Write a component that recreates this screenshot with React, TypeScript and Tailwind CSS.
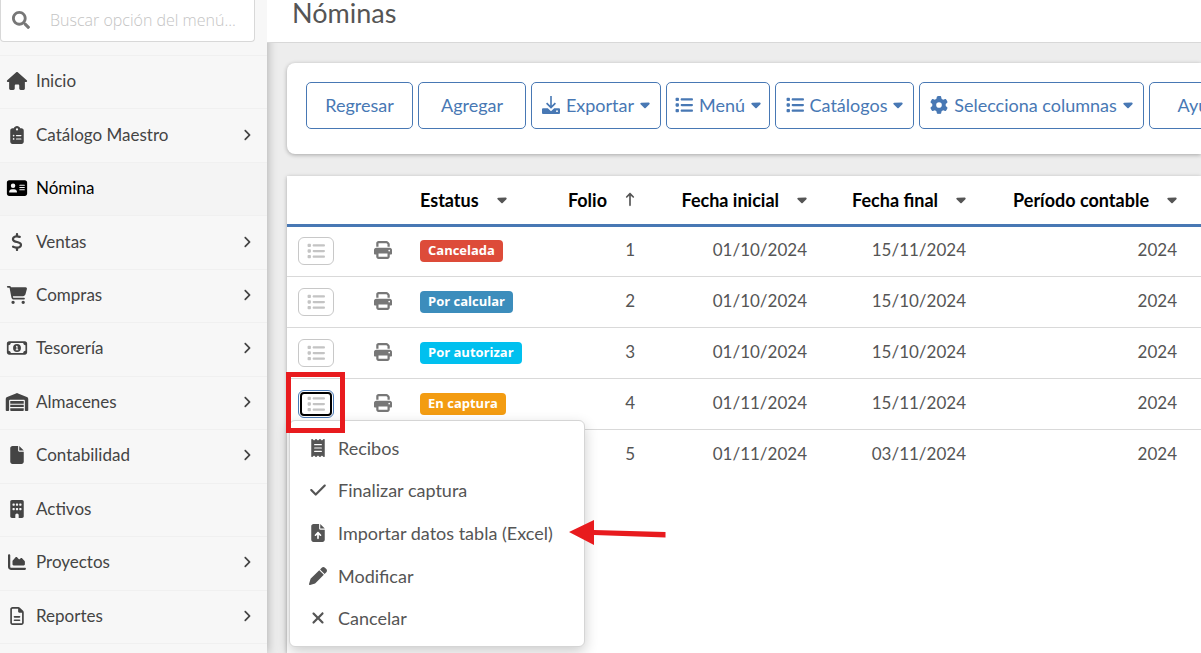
import React, { useState } from "react";
import { IconType } from "react-icons";
import { FaSearch } from "react-icons/fa";
import {
  FaAddressCard,
  FaAngleRight,
  FaArrowUpLong,
  FaBuilding,
  FaCaretDown,
  FaCartShopping,
  FaChartArea,
  FaCheck,
  FaClipboardList,
  FaDollarSign,
  FaFile,
  FaFileArrowUp,
  FaGear,
  FaHouse,
  FaList,
  FaPen,
  FaPrint,
  FaReceipt,
  FaRegFileLines,
  FaRegMoneyBill1,
  FaWarehouse,
  FaXmark,
} from "react-icons/fa6";

interface MenuItem {
  label: string;
  icon: IconType;
  expandable?: boolean;
  active?: boolean;
}

interface Payroll {
  folio: number;
  status?: string;
  badge?: string;
  start: string;
  end: string;
  period: number;
}

const menu: MenuItem[] = [
  { label: "Inicio", icon: FaHouse },
  { label: "Catálogo Maestro", icon: FaClipboardList, expandable: true },
  { label: "Nómina", icon: FaAddressCard, active: true },
  { label: "Ventas", icon: FaDollarSign, expandable: true },
  { label: "Compras", icon: FaCartShopping, expandable: true },
  { label: "Tesorería", icon: FaRegMoneyBill1, expandable: true },
  { label: "Almacenes", icon: FaWarehouse, expandable: true },
  { label: "Contabilidad", icon: FaFile, expandable: true },
  { label: "Activos", icon: FaBuilding },
  { label: "Proyectos", icon: FaChartArea, expandable: true },
  { label: "Reportes", icon: FaRegFileLines, expandable: true },
];

const payrolls: Payroll[] = [
  { folio: 1, status: "Cancelada", badge: "bg-[#dd4b39]", start: "01/10/2024", end: "15/11/2024", period: 2024 },
  { folio: 2, status: "Por calcular", badge: "bg-[#3c8dbc]", start: "01/10/2024", end: "15/10/2024", period: 2024 },
  { folio: 3, status: "Por autorizar", badge: "bg-[#00c0ef]", start: "01/10/2024", end: "15/10/2024", period: 2024 },
  { folio: 4, status: "En captura", badge: "bg-[#f39c12]", start: "01/11/2024", end: "15/11/2024", period: 2024 },
  { folio: 5, start: "01/11/2024", end: "03/11/2024", period: 2024 },
];

const actions: MenuItem[] = [
  { label: "Recibos", icon: FaReceipt },
  { label: "Finalizar captura", icon: FaCheck },
  { label: "Importar datos tabla (Excel)", icon: FaFileArrowUp },
  { label: "Modificar", icon: FaPen },
  { label: "Cancelar", icon: FaXmark },
];

const DownloadIcon = () => (
  <svg viewBox="0 0 18 18" className="size-[18px]" fill="currentColor">
    <path d="M8.200 0h1.600v9.600l3-3L14 7.800l-5 5-5-5 1.200-1.200 3 3z" />
    <path
      fillRule="evenodd"
      d="M1 12.300h4.800L9 15.300l3.200-3H17a1 1 0 0 1 1 1V17a1 1 0 0 1-1 1H1a1 1 0 0 1-1-1v-3.700a1 1 0 0 1 1-1zm14 2a.9.9 0 1 0 0 1.800.9.9 0 0 0 0-1.800z"
    />
  </svg>
);

const toolbar = [
  { label: "Regresar", width: "w-[107px]" },
  { label: "Agregar", width: "w-[108px]" },
  { label: "Exportar", width: "w-[130px]", icon: <DownloadIcon />, caret: true },
  { label: "Menú", width: "w-[104px]", icon: <FaList className="size-[18px]" />, caret: true },
  { label: "Catálogos", width: "w-[139px]", icon: <FaList className="size-[18px]" />, caret: true },
  { label: "Selecciona columnas", width: "w-[225px]", icon: <FaGear className="size-[18px]" />, caret: true },
  { label: "Ayuda", width: "w-[107px]" },
];

const Sidebar: React.FC = () => {
  const [search, setSearch] = useState<string>("");

  return (
    <aside className="relative w-[267px] shrink-0 bg-[#f7f7f7] text-[#444] shadow-[0_0_10px_rgba(0,0,0,0.3)]">
      <label className="flex h-[42px] w-[255px] items-center rounded-b border border-t-0 border-[#d8d8d8] bg-white pb-[2px] pl-[11px]">
        <FaSearch className="size-[18px] shrink-0 text-[#777]" />
        <input
          type="text"
          aria-label="Buscar"
          placeholder="Buscar opción del menú..."
          value={search}
          onChange={(e) => setSearch(e.target.value)}
          className="ml-5 w-full min-w-0 font-['Open_Sans',sans-serif] text-[16px] font-light outline-none placeholder:text-[#c4c4c4]"
        />
      </label>
      <nav className="mt-[13px] grid h-[589px] auto-rows-fr border-t border-[#f0f0f0]">
        {menu.map(({ label, icon: Icon, expandable, active }) => (
          <a
            key={label}
            href="#"
            className={`flex items-center border-b border-[#f0f0f0] pr-[13px] pb-[2px] pl-[5px] ${
              active ? "bg-[#f4f4f4] text-black" : ""
            }`}
          >
            <Icon className="h-[18px] w-6" />
            <span className="ml-[7px] flex-1">{label}</span>
            {expandable && <FaAngleRight className="size-[14px]" />}
          </a>
        ))}
      </nav>
    </aside>
  );
};

const ActionMenu: React.FC = () => (
  <div className="absolute top-[41px] left-[2px] z-10 grid h-[227px] w-[296px] auto-rows-fr rounded-md border border-[#d5d5d5] bg-white py-[6px] text-lg leading-6 shadow-[0_5px_14px_rgba(0,0,0,0.2)]">
    {actions.map(({ label, icon: Icon }) => (
      <button key={label} type="button" className="flex items-center pl-[18px] text-left">
        <Icon className="h-[18px] w-5" />
        <span className="ml-[10px] whitespace-nowrap">{label}</span>
      </button>
    ))}
  </div>
);

const Highlight: React.FC = () => (
  <>
    <div className="pointer-events-none absolute -top-[7px] -left-px z-20 h-[61px] w-[59px] border-[5px] border-[#e81b1e]" />
    <svg
      viewBox="0 0 97 26"
      className="pointer-events-none absolute top-[141px] left-[282px] z-20 h-[26px] w-[97px] max-w-none"
    >
      <path d="M0 12 25 0v10l71.500 2v5.500L25 15v10z" fill="#e81b1e" />
    </svg>
  </>
);

const SortCaret = () => <FaCaretDown className="h-[15px] w-[10px] text-[#555]" />;

const PayrollTable: React.FC = () => {
  const [openFolio, setOpenFolio] = useState<number | null>(4);

  return (
    <table className="w-full table-fixed border-collapse">
      <colgroup>
        <col className="w-[56px]" />
        <col className="w-[77px]" />
        <col className="w-[100px]" />
        <col className="w-[115px]" />
        <col className="w-[172px]" />
        <col className="w-[159px]" />
        <col />
      </colgroup>
      <thead>
        <tr className="h-[49px] border-b-[3px] border-[#4878b4] text-lg leading-6 text-black">
          <th />
          <th />
          <th className="p-0 whitespace-nowrap">
            <span className="flex items-center gap-[18px]">
              Estatus <SortCaret />
            </span>
          </th>
          <th className="p-0">
            <span className="flex items-center justify-end gap-[18px]">
              Folio <FaArrowUpLong className="h-[15px] w-[10px] text-[#555]" />
            </span>
          </th>
          {["Fecha inicial", "Fecha final"].map((title) => (
            <th key={title} className="p-0 whitespace-nowrap">
              <span className="flex items-center justify-end gap-[18px]">
                {title} <SortCaret />
              </span>
            </th>
          ))}
          <th className="p-0 pr-6 whitespace-nowrap">
            <span className="flex items-center justify-end gap-[18px]">
              Período contable <SortCaret />
            </span>
          </th>
        </tr>
      </thead>
      <tbody>
        {payrolls.map((row) => {
          const open = row.folio === openFolio;
          return (
            <tr key={row.folio} className="h-[51px] border-b border-[#d9d9d9] last:border-0">
              <td className="relative p-0 pl-[11px]">
                <button
                  type="button"
                  aria-label="Opciones"
                  onClick={() => setOpenFolio(open ? null : row.folio)}
                  className={`flex h-7 w-9 items-center justify-center rounded-md border text-[#c4c4c4] ${
                    open
                      ? "border-[#4878b4] outline-2 -outline-offset-4 outline-black"
                      : "border-[#c8c8c8]"
                  }`}
                >
                  <FaList className="size-[18px]" />
                </button>
                {open && <ActionMenu />}
                {open && <Highlight />}
              </td>
              <td className="p-0 pb-[2px] pl-[2px]">
                <FaPrint className="mx-auto size-[18px] text-[#777]" />
              </td>
              <td className="p-0">
                {row.status && (
                  <span
                    className={`flex h-[22px] w-fit items-center rounded px-2 pb-[2px] font-['Open_Sans',sans-serif] text-[13px] font-bold whitespace-nowrap text-white ${row.badge}`}
                  >
                    {row.status}
                  </span>
                )}
              </td>
              <td className="p-0 pb-[2px] text-right">{row.folio}</td>
              <td className="p-0 pb-[2px] text-right">{row.start}</td>
              <td className="p-0 pb-[2px] text-right">{row.end}</td>
              <td className="p-0 pr-6 pb-[2px] text-right">{row.period}</td>
            </tr>
          );
        })}
      </tbody>
    </table>
  );
};

const App: React.FC = () => {
  return (
    <div className="flex h-screen overflow-hidden bg-[#ededed] font-['Lato',sans-serif] text-[17px] leading-6 text-[#555]">
      <Sidebar />
      <main className="flex min-w-0 flex-1 flex-col">
        <header className="relative flex h-[43px] shrink-0 items-start border-b border-[#d8d8d8] bg-white pl-[25px]">
          <h1 className="text-[27px] leading-[26px]">Nóminas</h1>
        </header>
        <div className="flex flex-1 flex-col gap-[22px] pt-5 pl-5">
          <section className="flex h-[91px] shrink-0 items-start gap-[5px] rounded-l-lg bg-white pt-[19px] pl-[19px] text-lg leading-6 shadow-[0_1px_4px_rgba(0,0,0,0.3)]">
            {toolbar.map(({ label, width, icon, caret }) => (
              <button
                key={label}
                type="button"
                className={`flex h-[47px] shrink-0 items-center justify-center gap-[6px] rounded-[5px] border border-[#4878b4] pb-[2px] whitespace-nowrap text-[#4878b4] ${width}`}
              >
                {icon}
                {label}
                {caret && <FaCaretDown className="h-[15px] w-[10px]" />}
              </button>
            ))}
          </section>
          <section className="flex-1 bg-white shadow-[0_1px_4px_rgba(0,0,0,0.3)]">
            <PayrollTable />
          </section>
        </div>
      </main>
    </div>
  );
};

export default App;
